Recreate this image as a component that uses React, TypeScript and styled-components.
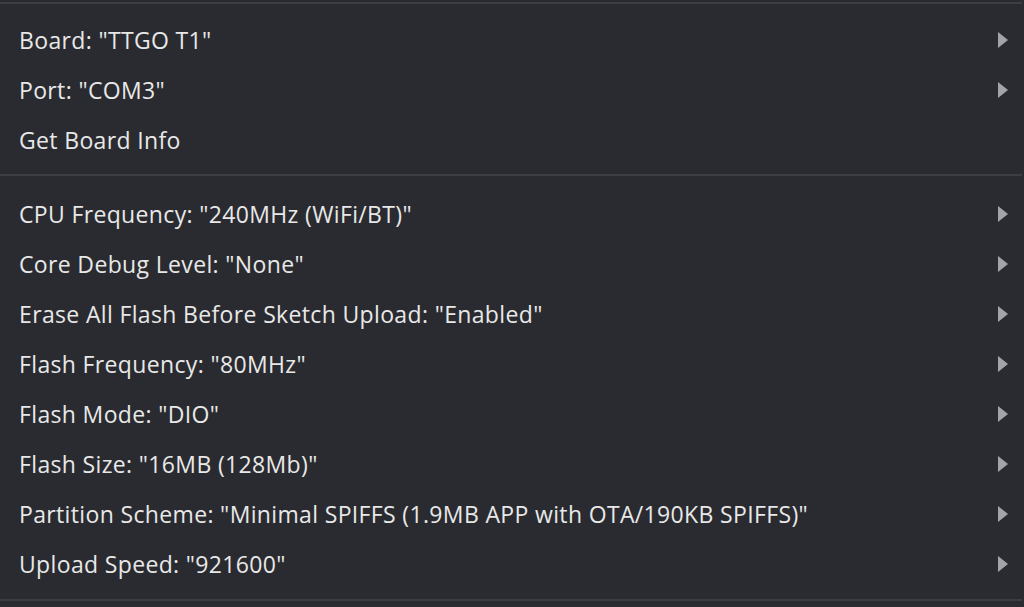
import styled, { createGlobalStyle } from 'styled-components';

const GlobalStyle = createGlobalStyle`
	html, body {
		margin: 0;
		padding: 0;
		background: #2a2b30;
	}
`;

const Menu = styled.div`
	width: 1024px;
	height: 607px;
	background-color: #2a2b30;
	padding-top: 2px;
	box-sizing: border-box;
	font-family: 'Open Sans', 'Noto Sans', sans-serif;
	color: #e8e8e8;
`;

const Separator = styled.div`
	width: 1022px;
	height: 2px;
	background-color: #3d3e43;
`;

const Group = styled.div<{ $top: number; $bottom: number }>`
	display: flex;
	flex-direction: column;
	padding: ${(p) => p.$top}px 0 ${(p) => p.$bottom}px;
`;

const Item = styled.div`
	display: flex;
	align-items: center;
	justify-content: space-between;
	height: 50px;
	padding: 0 16px 0 19px;
	font-size: 23px;
	letter-spacing: 0.35px;
	white-space: nowrap;
`;

const Arrow = styled.span`
	width: 0;
	height: 0;
	border-top: 8px solid transparent;
	border-bottom: 8px solid transparent;
	border-left: 10px solid #a3a3a8;
`;

const top = [
	{ label: 'Board: "TTGO T1"', sub: true },
	{ label: 'Port: "COM3"', sub: true },
	{ label: 'Get Board Info', sub: false },
];

const options = [
	'CPU Frequency: "240MHz (WiFi/BT)"',
	'Core Debug Level: "None"',
	'Erase All Flash Before Sketch Upload: "Enabled"',
	'Flash Frequency: "80MHz"',
	'Flash Mode: "DIO"',
	'Flash Size: "16MB (128Mb)"',
	'Partition Scheme: "Minimal SPIFFS (1.9MB APP with OTA/190KB SPIFFS)"',
	'Upload Speed: "921600"',
];

const App = () => {
	return (
		<>
			<GlobalStyle />
			<Menu>
				<Separator />
				<Group $top={11} $bottom={9}>
					{top.map((item) => (
						<Item key={item.label}>
							<span>{item.label}</span>
							{item.sub && <Arrow />}
						</Item>
					))}
				</Group>
				<Separator />
				<Group $top={13} $bottom={10}>
					{options.map((label) => (
						<Item key={label}>
							<span>{label}</span>
							<Arrow />
						</Item>
					))}
				</Group>
				<Separator />
			</Menu>
		</>
	);
};

export default App;
